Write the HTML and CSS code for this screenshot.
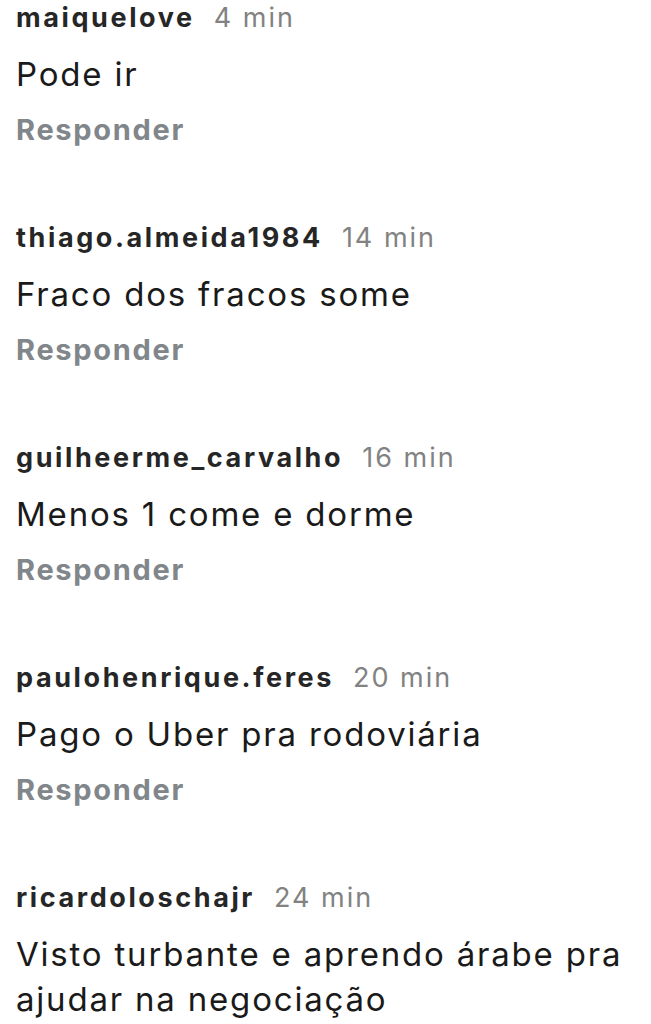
FILE: index.html
```html
<!DOCTYPE html>
<html>
<head>
    <link rel="stylesheet" href="styles.css">
</head>
<body>
    <div class="comments">
        <div class="comment">
            <div class="comment-head"><span class="user">maiquelove</span><span class="time">4 min</span></div>
            <div class="comment-text">Pode ir</div>
            <div class="reply">Responder</div>
        </div>
        <div class="comment">
            <div class="comment-head"><span class="user">thiago.almeida1984</span><span class="time">14 min</span></div>
            <div class="comment-text">Fraco dos fracos some</div>
            <div class="reply">Responder</div>
        </div>
        <div class="comment">
            <div class="comment-head"><span class="user">guilheerme_carvalho</span><span class="time">16 min</span></div>
            <div class="comment-text">Menos 1 come e dorme</div>
            <div class="reply">Responder</div>
        </div>
        <div class="comment">
            <div class="comment-head"><span class="user">paulohenrique.feres</span><span class="time">20 min</span></div>
            <div class="comment-text">Pago o Uber pra rodoviária</div>
            <div class="reply">Responder</div>
        </div>
        <div class="comment">
            <div class="comment-head"><span class="user">ricardoloschajr</span><span class="time">24 min</span></div>
            <div class="comment-text">Visto turbante e aprendo árabe pra ajudar na negociação</div>
            <div class="reply">Responder</div>
        </div>
    </div>
</body>
</html>
```

FILE: styles.css
```css
body
{
    margin: 0;
    background-color: #ffffff;
    font-family: Inter, Roboto, sans-serif;
}
.comments
{
    padding: 0 6px 0 16px;
}
.comment
{
    margin-bottom: 72px;
}
.comment-head
{
    display: flex;
    align-items: baseline;
    gap: 19px;
    font-size: 27px;
    line-height: 35px;
}
.user
{
    font-weight: 700;
    letter-spacing: 2.6px;
    color: #262626;
}
.time
{
    letter-spacing: 2px;
    color: #828282;
}
.comment-text
{
    margin-top: 17px;
    font-size: 33px;
    line-height: 45px;
    letter-spacing: 1.8px;
    color: #1a1a1a;
}
.reply
{
    margin-top: 15px;
    font-size: 29px;
    line-height: 36px;
    font-weight: 700;
    letter-spacing: 1.7px;
    color: #80868a;
}
```
